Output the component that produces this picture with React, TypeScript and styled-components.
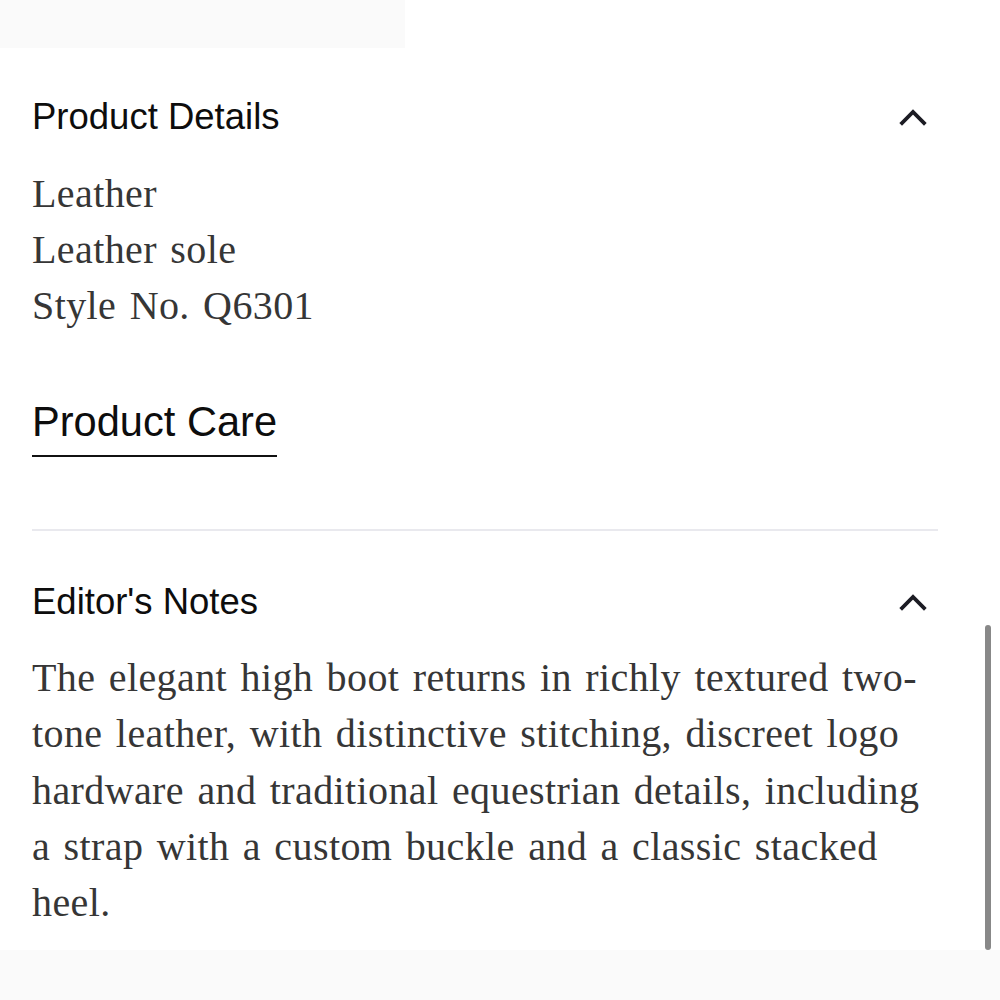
import React from "react";
import styled, { createGlobalStyle } from "styled-components";

const GlobalStyle = createGlobalStyle`
  html, body {
    margin: 0;
    padding: 0;
    background: #ffffff;
  }
  body {
    width: 1000px;
    height: 1000px;
    overflow: hidden;
  }
`;

const Page = styled.main`
  width: 1000px;
  height: 1000px;
  display: flex;
  flex-direction: column;
  position: relative;
`;

const TopFade = styled.div`
  width: 405px;
  height: 48px;
  background: #fafafa;
`;

const Content = styled.div`
  padding: 0 62px 0 32px;
  display: flex;
  flex-direction: column;
`;

const Header = styled.div<{ $top: number }>`
  margin-top: ${(p) => p.$top}px;
  height: 40px;
  display: flex;
  align-items: center;
  justify-content: space-between;
`;

const Title = styled.h2`
  margin: 0;
  font-family: "Liberation Sans", Arial, sans-serif;
  font-weight: 400;
  font-size: 36.5px;
  line-height: 40px;
  color: #0d0d0d;
`;

const Chevron = styled.svg`
  width: 28px;
  height: 18px;
  margin-right: 11px;
`;

const serifText = `
  font-family: "Liberation Serif", "Times New Roman", serif;
  font-size: 40px;
  letter-spacing: 0.4px;
  word-spacing: 3px;
  color: #363636;
`;

const SerifList = styled.ul`
  ${serifText}
  list-style: none;
  margin: 28.5px 0 0;
  padding: 0;
  line-height: 56px;
`;

const Tab = styled.div`
  align-self: flex-start;
  margin-top: 68px;
  padding-bottom: 13.5px;
  border-bottom: 2px solid #111;
  font-family: "Liberation Sans", Arial, sans-serif;
  font-size: 41.6px;
  line-height: 40px;
  color: #0d0d0d;
`;

const Divider = styled.hr`
  margin: 72px 0 0;
  border: 0;
  height: 2px;
  background: #e9e9ee;
`;

const Paragraph = styled.p`
  ${serifText}
  margin: 28px 0 0;
  line-height: 56.3px;
`;

const BottomBar = styled.div`
  margin-top: auto;
  height: 50px;
  background: #fafafa;
`;

const ScrollThumb = styled.div`
  position: absolute;
  left: 985px;
  top: 625px;
  width: 6px;
  height: 325px;
  border-radius: 3px;
  background: #888888;
`;

function Up() {
  return (
    <Chevron viewBox="0 0 28 18" fill="none">
      <polyline
        points="3,15 14,4 25,15"
        stroke="#1c1c24"
        strokeWidth="3.8"
        strokeLinecap="square"
      />
    </Chevron>
  );
}

export default function App() {
  return (
    <>
      <GlobalStyle />
      <Page>
        <TopFade />
        <Content>
          <Header $top={49}>
            <Title>Product Details</Title>
            <Up />
          </Header>
          <SerifList>
            <li>Leather</li>
            <li>Leather sole</li>
            <li>Style No. Q6301</li>
          </SerifList>
          <Tab>Product Care</Tab>
          <Divider />
          <Header $top={51}>
            <Title>Editor's Notes</Title>
            <Up />
          </Header>
          <Paragraph>
            The elegant high boot returns in richly textured two-tone leather,
            with distinctive stitching, discreet logo hardware and traditional
            equestrian details, including a strap with a custom buckle and a
            classic stacked heel.
          </Paragraph>
        </Content>
        <BottomBar />
        <ScrollThumb />
      </Page>
    </>
  );
}
